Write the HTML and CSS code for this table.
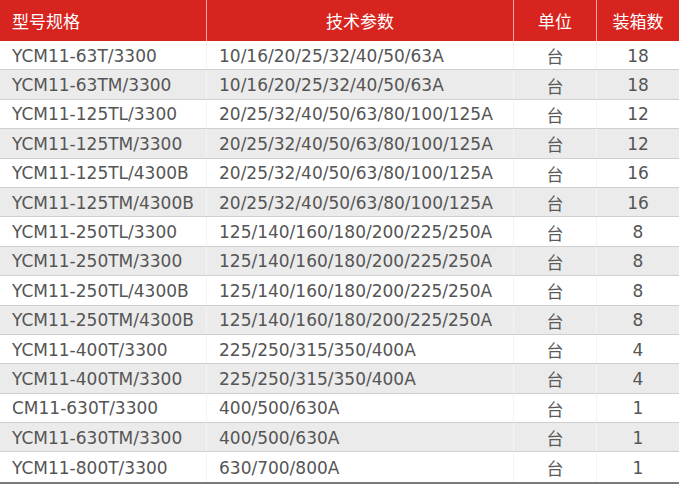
FILE: index.html
```html
<!DOCTYPE html>
<html lang="zh-CN">
<head>
<meta charset="utf-8">
<title>YCM11 规格表</title>
<link rel="stylesheet" href="styles.css">
</head>
<body>
<div class="spec-table">
  <div class="row head">
    <div class="cell left">型号规格</div>
    <div class="cell center">技术参数</div>
    <div class="cell center">单位</div>
    <div class="cell center">装箱数</div>
  </div>
  <div class="row"><div class="cell left">YCM11-63T/3300</div><div class="cell left">10/16/20/25/32/40/50/63A</div><div class="cell center cjk">台</div><div class="cell center">18</div></div>
  <div class="row"><div class="cell left">YCM11-63TM/3300</div><div class="cell left">10/16/20/25/32/40/50/63A</div><div class="cell center cjk">台</div><div class="cell center">18</div></div>
  <div class="row"><div class="cell left">YCM11-125TL/3300</div><div class="cell left">20/25/32/40/50/63/80/100/125A</div><div class="cell center cjk">台</div><div class="cell center">12</div></div>
  <div class="row"><div class="cell left">YCM11-125TM/3300</div><div class="cell left">20/25/32/40/50/63/80/100/125A</div><div class="cell center cjk">台</div><div class="cell center">12</div></div>
  <div class="row"><div class="cell left">YCM11-125TL/4300B</div><div class="cell left">20/25/32/40/50/63/80/100/125A</div><div class="cell center cjk">台</div><div class="cell center">16</div></div>
  <div class="row"><div class="cell left">YCM11-125TM/4300B</div><div class="cell left">20/25/32/40/50/63/80/100/125A</div><div class="cell center cjk">台</div><div class="cell center">16</div></div>
  <div class="row"><div class="cell left">YCM11-250TL/3300</div><div class="cell left">125/140/160/180/200/225/250A</div><div class="cell center cjk">台</div><div class="cell center">8</div></div>
  <div class="row"><div class="cell left">YCM11-250TM/3300</div><div class="cell left">125/140/160/180/200/225/250A</div><div class="cell center cjk">台</div><div class="cell center">8</div></div>
  <div class="row"><div class="cell left">YCM11-250TL/4300B</div><div class="cell left">125/140/160/180/200/225/250A</div><div class="cell center cjk">台</div><div class="cell center">8</div></div>
  <div class="row"><div class="cell left">YCM11-250TM/4300B</div><div class="cell left">125/140/160/180/200/225/250A</div><div class="cell center cjk">台</div><div class="cell center">8</div></div>
  <div class="row"><div class="cell left">YCM11-400T/3300</div><div class="cell left">225/250/315/350/400A</div><div class="cell center cjk">台</div><div class="cell center">4</div></div>
  <div class="row"><div class="cell left">YCM11-400TM/3300</div><div class="cell left">225/250/315/350/400A</div><div class="cell center cjk">台</div><div class="cell center">4</div></div>
  <div class="row"><div class="cell left">CM11-630T/3300</div><div class="cell left">400/500/630A</div><div class="cell center cjk">台</div><div class="cell center">1</div></div>
  <div class="row"><div class="cell left">YCM11-630TM/3300</div><div class="cell left">400/500/630A</div><div class="cell center cjk">台</div><div class="cell center">1</div></div>
  <div class="row last"><div class="cell left">YCM11-800T/3300</div><div class="cell left">630/700/800A</div><div class="cell center cjk">台</div><div class="cell center">1</div></div>
</div>
</body>
</html>
```
FILE: styles.css
```css
html, body {
  margin: 0;
  padding: 0;
  background: #ffffff;
}

.spec-table {
  width: 679px;
  font-family: "DejaVu Sans", "Noto Sans CJK SC", sans-serif;
  font-size: 17px;
  color: #555555;
}

.row {
  display: grid;
  grid-template-columns: 207px 307px 83px 82px;
  height: 29.4px;
  box-sizing: border-box;
  border-bottom: 1px solid #cfcfcf;
  background: #ffffff;
}

.row:nth-child(odd) {
  background: #ebebeb;
}

.row.head {
  height: 41px;
  background: #d8241e;
  border-bottom: none;
  color: #ffffff;
  font-family: "Noto Sans CJK SC", sans-serif;
  font-size: 17px;
}

.row.last {
  height: 31.4px;
  border-bottom: 2px solid #7a7a7a;
}

.cell {
  display: flex;
  align-items: center;
  white-space: nowrap;
  border-right: 1px solid #f4f4f4;
  padding-top: 1px;
}

.cell:last-child {
  border-right: none;
}

.row.head .cell {
  border-right-color: rgba(255, 255, 255, 0.6);
  padding-top: 0;
}

.left {
  padding-left: 12px;
}

.center {
  justify-content: center;
}

.cjk {
  font-family: "Noto Sans CJK SC", sans-serif;
  color: #5a5a5a;
}
```
